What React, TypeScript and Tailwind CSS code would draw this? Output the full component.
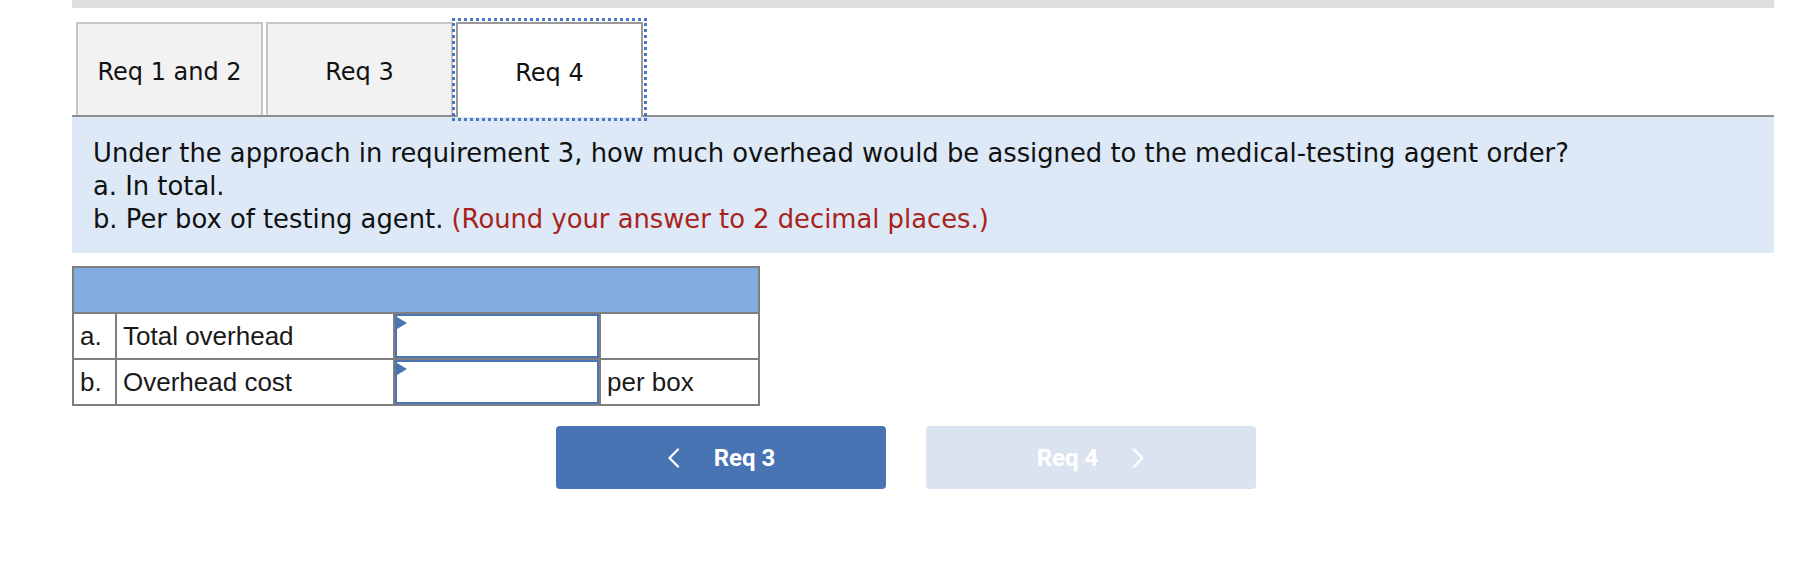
import React from 'react';

const tabs = [
  { label: 'Req 1 and 2', active: false },
  { label: 'Req 3', active: false },
  { label: 'Req 4', active: true },
];

const rows = [
  { key: 'a.', label: 'Total overhead', unit: '' },
  { key: 'b.', label: 'Overhead cost', unit: 'per box' },
];

const Chevron = ({ dir }: { dir: 'left' | 'right' }) => (
  <svg width="13" height="20" viewBox="0 0 13 20" fill="none">
    <path
      d={dir === 'left' ? 'M11 1.5 L2.5 10 L11 18.5' : 'M2 1.5 L10.5 10 L2 18.5'}
      stroke="white"
      strokeWidth="2.2"
      strokeLinecap="round"
      strokeLinejoin="round"
    />
  </svg>
);

const AnswerInput = () => (
  <div className="relative h-[44px] w-full border-2 border-[#4a74b2] bg-white">
    {/* little marker in the top-left corner */}
    <span className="absolute left-0 top-[1px] h-0 w-0 border-y-[6px] border-l-[10px] border-y-transparent border-l-[#4a74b2]" />
  </div>
);

export default function App() {
  return (
    <div className="h-[562px] w-full bg-white">
      <div className="ml-[72px] w-[1702px]">
        {/* top bar */}
        <div className="h-[8px] bg-[#dfdfdf]" />

        {/* Tabs */}
        <div className="mt-[14px] flex gap-[3px] border-b-2 border-[#8f8f8f] pl-[4px] font-['DejaVu_Sans',Verdana,sans-serif] text-[24px] text-[#111]">
          {tabs.map((tab) =>
            tab.active ? (
              <div
                key={tab.label}
                className="relative -mb-[2px] flex h-[95px] w-[187px] items-center justify-center border-2 border-b-0 border-[#999] bg-white pt-[5px] outline-3 outline-offset-1 outline-dotted outline-[#4a78c2]"
              >
                {tab.label}
              </div>
            ) : (
              <div
                key={tab.label}
                className="flex h-[93px] w-[187px] items-center justify-center border-2 border-b-0 border-[#c6c6c6] bg-[#f2f2f2] pt-[5px]"
              >
                {tab.label}
              </div>
            )
          )}
        </div>

        {/* Question */}
        <div className="h-[136px] bg-[#dde9f7] pl-[21px] pt-[20px] font-['DejaVu_Sans',Verdana,sans-serif] text-[25.8px] leading-[33px] text-[#111]">
          <p>Under the approach in requirement 3, how much overhead would be assigned to the medical-testing agent order?</p>
          <p>a. In total.</p>
          <p>
            b. Per box of testing agent. <span className="text-[#a8231c]">(Round your answer to 2 decimal places.)</span>
          </p>
        </div>

        {/* Answer table */}
        <table className="mt-[13px] w-[686px] table-fixed border-collapse border-2 border-[#7f7f7f] font-['Liberation_Sans',Arial,sans-serif] text-[26px] text-[#1a1a1a]">
          <colgroup>
            <col className="w-[43px]" />
            <col className="w-[278px]" />
            <col className="w-[206px]" />
            <col className="w-[159px]" />
          </colgroup>
          <thead>
            <tr>
              <th colSpan={4} className="h-[46px] border-2 border-[#7f7f7f] bg-[#83abdf]" />
            </tr>
          </thead>
          <tbody>
            {rows.map((row) => (
              <tr key={row.key} className="h-[46px]">
                <td className="border-2 border-[#7f7f7f] pl-[6px] align-middle">{row.key}</td>
                <td className="border-2 border-[#7f7f7f] pl-[6px] align-middle">{row.label}</td>
                <td className="border-2 border-[#7f7f7f] p-0 align-middle">
                  <AnswerInput />
                </td>
                <td className="border-2 border-[#7f7f7f] pl-[6px] align-middle">{row.unit}</td>
              </tr>
            ))}
          </tbody>
        </table>

        {/* Navigation */}
        <div className="ml-[484px] mt-[20px] flex gap-[40px] font-['Roboto',Arial,sans-serif] text-[24px] font-bold text-white">
          <button className="flex h-[63px] w-[330px] items-center justify-center gap-[34px] rounded-[4px] bg-[#4874b3]">
            <Chevron dir="left" />
            <span>Req 3</span>
          </button>
          <button className="flex h-[63px] w-[330px] items-center justify-center gap-[34px] rounded-[4px] bg-[#dae3ef]">
            <span>Req 4</span>
            <Chevron dir="right" />
          </button>
        </div>
      </div>
    </div>
  );
}
